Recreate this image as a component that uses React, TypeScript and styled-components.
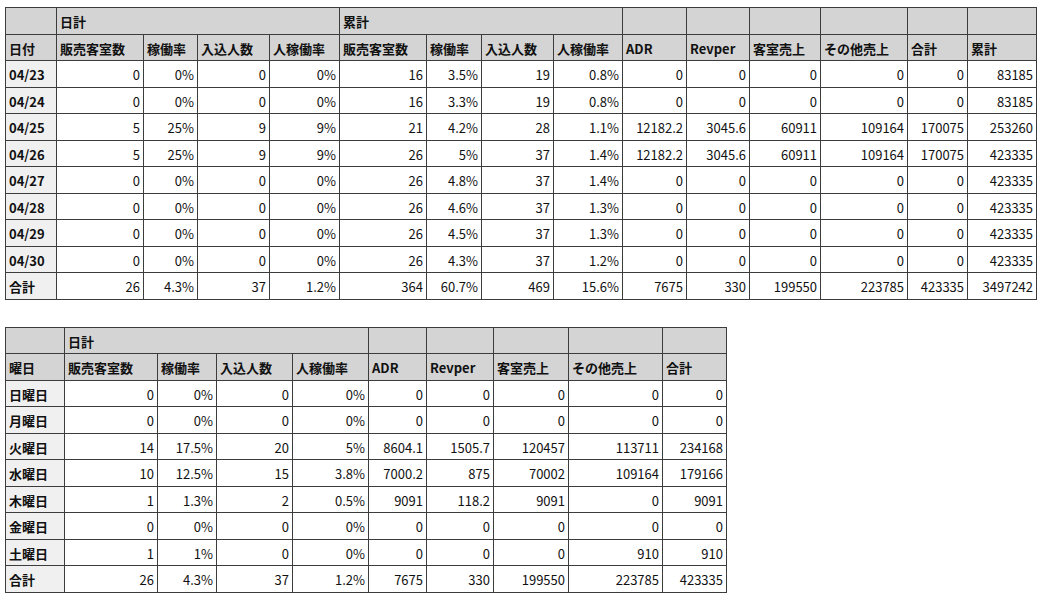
import React from 'react';
import styled, { createGlobalStyle } from 'styled-components';

const GlobalStyle = createGlobalStyle`
  body {
    margin: 0;
    background: #ffffff;
    font-family: "Noto Sans CJK JP", "Noto Sans", sans-serif;
    color: #111;
  }
`;

const Page = styled.div`
  display: flex;
  flex-direction: column;
  align-items: flex-start;
  gap: 27px;
  padding: 7px 5px;
`;

const Table = styled.table`
  border-collapse: collapse;
  table-layout: fixed;
  font-size: 13px;
  line-height: 1;
`;

const Row = styled.tr`
  height: 26.5px;
`;

const HeadCell = styled.th`
  background: #d4d4d4;
  border: 1px solid #3c3c3c;
  font-weight: 700;
  text-align: left;
  padding: 2px 3px 0;
  white-space: nowrap;
  vertical-align: middle;
`;

const LabelCell = styled.th`
  background: #f0f0f0;
  border: 1px solid #3c3c3c;
  font-weight: 700;
  text-align: left;
  padding: 2px 3px 0;
  white-space: nowrap;
`;

const ValueCell = styled.td`
  border: 1px solid #3c3c3c;
  text-align: right;
  padding: 2px 3px 0;
  white-space: nowrap;
`;

type Sheet = {
  widths: number[];
  corner: string;
  subHeads: string[];
  extraHeads: string[];
  groups: string[];
  rows: (string | number)[][];
};

const dailyHeads = ['販売客室数', '稼働率', '入込人数', '人稼働率'];

const dateSheet: Sheet = {
  widths: [51, 87, 54, 72, 70, 87, 55, 72, 69, 64, 63, 71, 87, 60, 69],
  corner: '日付',
  groups: ['日計', '累計'],
  subHeads: [...dailyHeads, ...dailyHeads],
  extraHeads: ['ADR', 'Revper', '客室売上', 'その他売上', '合計', '累計'],
  rows: [
    ['04/23', 0, '0%', 0, '0%', 16, '3.5%', 19, '0.8%', 0, 0, 0, 0, 0, 83185],
    ['04/24', 0, '0%', 0, '0%', 16, '3.3%', 19, '0.8%', 0, 0, 0, 0, 0, 83185],
    ['04/25', 5, '25%', 9, '9%', 21, '4.2%', 28, '1.1%', 12182.2, 3045.6, 60911, 109164, 170075, 253260],
    ['04/26', 5, '25%', 9, '9%', 26, '5%', 37, '1.4%', 12182.2, 3045.6, 60911, 109164, 170075, 423335],
    ['04/27', 0, '0%', 0, '0%', 26, '4.8%', 37, '1.4%', 0, 0, 0, 0, 0, 423335],
    ['04/28', 0, '0%', 0, '0%', 26, '4.6%', 37, '1.3%', 0, 0, 0, 0, 0, 423335],
    ['04/29', 0, '0%', 0, '0%', 26, '4.5%', 37, '1.3%', 0, 0, 0, 0, 0, 423335],
    ['04/30', 0, '0%', 0, '0%', 26, '4.3%', 37, '1.2%', 0, 0, 0, 0, 0, 423335],
    ['合計', 26, '4.3%', 37, '1.2%', 364, '60.7%', 469, '15.6%', 7675, 330, 199550, 223785, 423335, 3497242],
  ],
};

const weekdaySheet: Sheet = {
  widths: [59, 93, 59, 76, 76, 58, 67, 75, 94, 64],
  corner: '曜日',
  groups: ['日計'],
  subHeads: dailyHeads,
  extraHeads: ['ADR', 'Revper', '客室売上', 'その他売上', '合計'],
  rows: [
    ['日曜日', 0, '0%', 0, '0%', 0, 0, 0, 0, 0],
    ['月曜日', 0, '0%', 0, '0%', 0, 0, 0, 0, 0],
    ['火曜日', 14, '17.5%', 20, '5%', 8604.1, 1505.7, 120457, 113711, 234168],
    ['水曜日', 10, '12.5%', 15, '3.8%', 7000.2, 875, 70002, 109164, 179166],
    ['木曜日', 1, '1.3%', 2, '0.5%', 9091, 118.2, 9091, 0, 9091],
    ['金曜日', 0, '0%', 0, '0%', 0, 0, 0, 0, 0],
    ['土曜日', 1, '1%', 0, '0%', 0, 0, 0, 910, 910],
    ['合計', 26, '4.3%', 37, '1.2%', 7675, 330, 199550, 223785, 423335],
  ],
};

const ReportTable: React.FC<{ sheet: Sheet }> = ({ sheet }) => {
  const total = sheet.widths.reduce((a, b) => a + b, 0);
  return (
    <Table style={{ width: total }}>
      <colgroup>
        {sheet.widths.map((w, i) => (
          <col key={i} style={{ width: w }} />
        ))}
      </colgroup>
      <thead>
        <Row>
          <HeadCell />
          {sheet.groups.map((g) => (
            <HeadCell key={g} colSpan={4}>
              {g}
            </HeadCell>
          ))}
          {sheet.extraHeads.map((_, i) => (
            <HeadCell key={i} />
          ))}
        </Row>
        <Row>
          <HeadCell>{sheet.corner}</HeadCell>
          {[...sheet.subHeads, ...sheet.extraHeads].map((h, i) => (
            <HeadCell key={i}>{h}</HeadCell>
          ))}
        </Row>
      </thead>
      <tbody>
        {sheet.rows.map(([label, ...values]) => (
          <Row key={label}>
            <LabelCell>{label}</LabelCell>
            {values.map((v, i) => (
              <ValueCell key={i}>{v}</ValueCell>
            ))}
          </Row>
        ))}
      </tbody>
    </Table>
  );
};

const App: React.FC = () => (
  <>
    <GlobalStyle />
    <Page>
      <ReportTable sheet={dateSheet} />
      <ReportTable sheet={weekdaySheet} />
    </Page>
  </>
);

export default App;
